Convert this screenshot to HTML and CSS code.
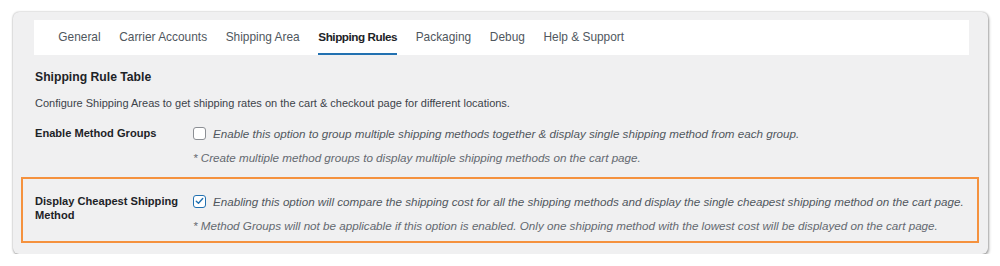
FILE: index.html
```html
<!DOCTYPE html>
<html>
<head>
<meta charset="utf-8">
<link rel="stylesheet" href="styles.css">
</head>
<body>
<div class="panel">
  <nav class="tabs">
    <span class="tab">General</span>
    <span class="tab">Carrier Accounts</span>
    <span class="tab">Shipping Area</span>
    <span class="tab active">Shipping Rules</span>
    <span class="tab">Packaging</span>
    <span class="tab">Debug</span>
    <span class="tab">Help &amp; Support</span>
  </nav>
  <div class="content">
    <h2 class="title">Shipping Rule Table</h2>
    <p class="desc">Configure Shipping Areas to get shipping rates on the cart &amp; checkout page for different locations.</p>
    <div class="row">
      <div class="label">Enable Method Groups</div>
      <div class="field">
        <div class="opt"><span class="cb"></span><span class="opt-text">Enable this option to group multiple shipping methods together &amp; display single shipping method from each group.</span></div>
        <div class="note">* Create multiple method groups to display multiple shipping methods on the cart page.</div>
      </div>
    </div>
    <div class="row highlight">
      <div class="label">Display Cheapest Shipping<br>Method</div>
      <div class="field">
        <div class="opt"><span class="cb checked"><svg viewBox="0 0 16 16" width="12" height="12"><path d="M3.3 8.2 L6.5 11.3 L12.7 4.3" fill="none" stroke="#2271b1" stroke-width="2" stroke-linecap="round" stroke-linejoin="round"/></svg></span><span class="opt-text">Enabling this option will compare the shipping cost for all the shipping methods and display the single cheapest shipping method on the cart page.</span></div>
        <div class="note">* Method Groups will not be applicable if this option is enabled. Only one shipping method with the lowest cost will be displayed on the cart page.</div>
      </div>
    </div>
  </div>
</div>
</body>
</html>
```

FILE: styles.css
```css
html, body {
  margin: 0;
  padding: 0;
  background: #ffffff;
}
body {
  font-family: "Liberation Sans", Arial, sans-serif;
  color: #1d2327;
  padding: 12px 12px 0 13px;
}
.panel {
  width: 975px;
  height: 242px;
  box-sizing: border-box;
  background: #f0f0f1;
  border-radius: 6px;
  box-shadow: 0 0 2px rgba(0,0,0,0.35), 1px 2px 3px rgba(0,0,0,0.3);
  padding: 8px 19px 0 21px;
}
.tabs {
  display: flex;
  background: #ffffff;
  height: 35px;
  padding-left: 15px;
}
.tab {
  display: flex;
  align-items: center;
  padding: 0 9.3px;
  font-size: 11.9px;
  color: #50575e;
  box-sizing: border-box;
  height: 35px;
  border-bottom: 2px solid transparent;
}
.tab.active {
  color: #1d2327;
  font-weight: bold;
  font-size: 11.7px;
  letter-spacing: -0.45px;
  border-bottom-color: #2271b1;
  margin: 0 9.3px;
  padding: 0;
}
.content {
  padding-left: 1px;
}
.title {
  margin: 14px 0 0 0;
  font-size: 12.2px;
  font-weight: bold;
  line-height: 16px;
}
.desc {
  margin: 10px 0 0 0;
  font-size: 11px;
  line-height: 16px;
  color: #3c434a;
}
.row {
  display: flex;
  margin-top: 15px;
}
.label {
  width: 158px;
  flex: none;
  font-size: 11.1px;
  font-weight: bold;
  line-height: 14px;
}
.field {
  display: flex;
  flex-direction: column;
}
.opt {
  display: flex;
  align-items: center;
  height: 14px;
}
.cb {
  width: 13px;
  height: 13px;
  box-sizing: border-box;
  border: 1px solid #8c8f94;
  border-radius: 3px;
  background: #ffffff;
  margin-right: 7px;
  display: flex;
  align-items: center;
  justify-content: center;
}
.cb.checked {
  border: 1.5px solid #2271b1;
}
.opt-text {
  font-size: 11.65px;
  font-style: italic;
  color: #50575e;
}
.note {
  margin-top: 11px;
  font-size: 11.65px;
  font-style: italic;
  color: #646970;
  line-height: 14px;
}
.highlight {
  margin: 12px -10px 0 -14px;
  border: 2px solid #f5923e;
  padding: 15px 0 8px 12px;
}
```
